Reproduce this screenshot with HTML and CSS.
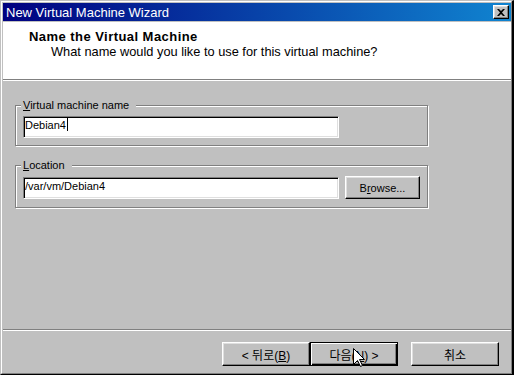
FILE: index.html
```html
<!DOCTYPE html>
<html lang="ko">
<head>
  <meta charset="UTF-8" />
  <title>New Virtual Machine Wizard</title>
  <link rel="stylesheet" href="styles.css">
</head>
<body>

  <div class="window">
    <div class="frame">

      <div class="titlebar">
        <span class="title">New Virtual Machine Wizard</span>
        <button class="close-button">
          <svg width="8" height="7" viewBox="0 0 8 7"><path d="M0 0h2l2 2 2-2h2L5 3.5 8 7H6L4 5 2 7H0l3-3.5z" fill="#000"/></svg>
        </button>
      </div>

      <div class="header">
        <h1>Name the Virtual Machine</h1>
        <p>What name would you like to use for this virtual machine?</p>
      </div>

      <div class="content">
        <fieldset class="group">
          <legend><u>V</u>irtual machine name</legend>
          <div class="textbox">Debian4<span class="caret"></span></div>
        </fieldset>

        <fieldset class="group group-location">
          <legend><u>L</u>ocation</legend>
          <div class="field-row">
            <div class="textbox">/var/vm/Debian4</div>
            <button class="button browse">B<u>r</u>owse...</button>
          </div>
        </fieldset>
      </div>

      <div class="footer">
        <button class="button">&lt; 뒤로(<u>B</u>)</button>
        <button class="button default">다음(<u>N</u>) &gt;</button>
        <button class="button cancel">취소</button>
      </div>

    </div>

    <!-- mouse pointer resting on the Next button -->
    <svg class="cursor" width="13" height="20" viewBox="0 0 13 20">
      <path d="M0.5 0.5V16.5L4.5 12.5L7.5 18.5L9.5 17.5L6.5 11.5H11.5Z" fill="#fff" stroke="#000" stroke-width="1"/>
    </svg>
  </div>

</body>
</html>
```

FILE: styles.css
```css
* { margin: 0; padding: 0; box-sizing: border-box; }

body {
  background-color: #c0c0c0;
  font-family: "Liberation Sans", "Noto Sans CJK KR", sans-serif;
  font-size: 11px;
  color: #000;
}

.window {
  position: relative;
  width: 514px;
  height: 375px;
  border-style: solid;
  border-width: 1px 2px 1px 1px;
  border-color: #c0c0c0 #000 #000 #c0c0c0;
}

.frame {
  height: 100%;
  display: flex;
  flex-direction: column;
  border: 1px solid;
  border-color: #fff #808080 #808080 #fff;
  padding: 1px 0 1px 1px;
}

.titlebar {
  height: 18px;
  flex-shrink: 0;
  display: flex;
  align-items: center;
  justify-content: space-between;
  padding: 0 2px 0 3px;
  margin-bottom: 1px;
  background: linear-gradient(to right, #000080, #1084d0);
  color: #fff;
  font-size: 13px;
}

.close-button {
  width: 16px;
  height: 14px;
  display: flex;
  align-items: center;
  justify-content: center;
  background-color: #c0c0c0;
  border: 1px solid;
  border-color: #fff #000 #000 #fff;
  box-shadow: inset -1px -1px #808080, inset 1px 1px #dfdfdf;
}

.header {
  height: 58px;
  flex-shrink: 0;
  background-color: #fff;
  border-bottom: 1px solid #808080;
  padding: 7px 0 0 26px;
}

.header h1 {
  font-size: 13px;
  font-weight: bold;
  letter-spacing: 0.45px;
  line-height: 15px;
}

.header p {
  font-size: 12.8px;
  line-height: 15px;
  margin-left: 22px;
}

.content {
  flex: 1;
  border-top: 1px solid #fff;
  padding-left: 12px;
}

.group {
  width: 413px;
  min-width: 0;
  margin-top: 17px;
  padding: 4px 7px 7px 7px;
  border: 1px solid #808080;
  box-shadow: inset 1px 1px #fff, 1px 1px #fff;
}

.group + .group { margin-top: 12px; }
.group-location { padding-bottom: 8px; }

.group legend {
  line-height: 14px;
  padding: 0 7px 0 2px;
  margin-left: -2px;
  background-color: #c0c0c0;
}

.textbox {
  width: 316px;
  height: 22px;
  padding: 1px 1px;
  line-height: 14px;
  background-color: #fff;
  border: 1px solid;
  border-color: #808080 #fff #fff #808080;
  box-shadow: inset 1px 1px #000, inset -1px -1px #dfdfdf;
  white-space: nowrap;
}

.caret {
  display: inline-block;
  width: 1px;
  height: 13px;
  margin-left: 1px;
  vertical-align: top;
  background-color: #000;
}

.field-row {
  display: flex;
  align-items: flex-start;
  gap: 6px;
}

.field-row .textbox { margin-top: 1px; }

.button {
  width: 88px;
  height: 24px;
  font-family: "Liberation Sans", "Noto Sans CJK KR", sans-serif;
  font-size: 12px;
  color: #000;
  background-color: #c0c0c0;
  border: 1px solid;
  border-color: #fff #000 #000 #fff;
  box-shadow: inset -1px -1px #808080, inset 1px 1px #dfdfdf;
}

.button.default {
  border-color: #000;
  box-shadow: inset 1px 1px #fff, inset -1px -1px #000, inset -2px -2px #808080;
}

.button.browse {
  width: 75px;
  height: 23px;
  font-size: 11px;
}

.footer {
  height: 43px;
  flex-shrink: 0;
  display: flex;
  justify-content: flex-end;
  align-items: flex-start;
  padding: 12px 12px 0 0;
  border-top: 1px solid #808080;
  box-shadow: inset 0 1px #fff;
}

.footer .cancel { margin-left: 13px; }

.cursor {
  position: absolute;
  left: 352px;
  top: 347px;
}
```
